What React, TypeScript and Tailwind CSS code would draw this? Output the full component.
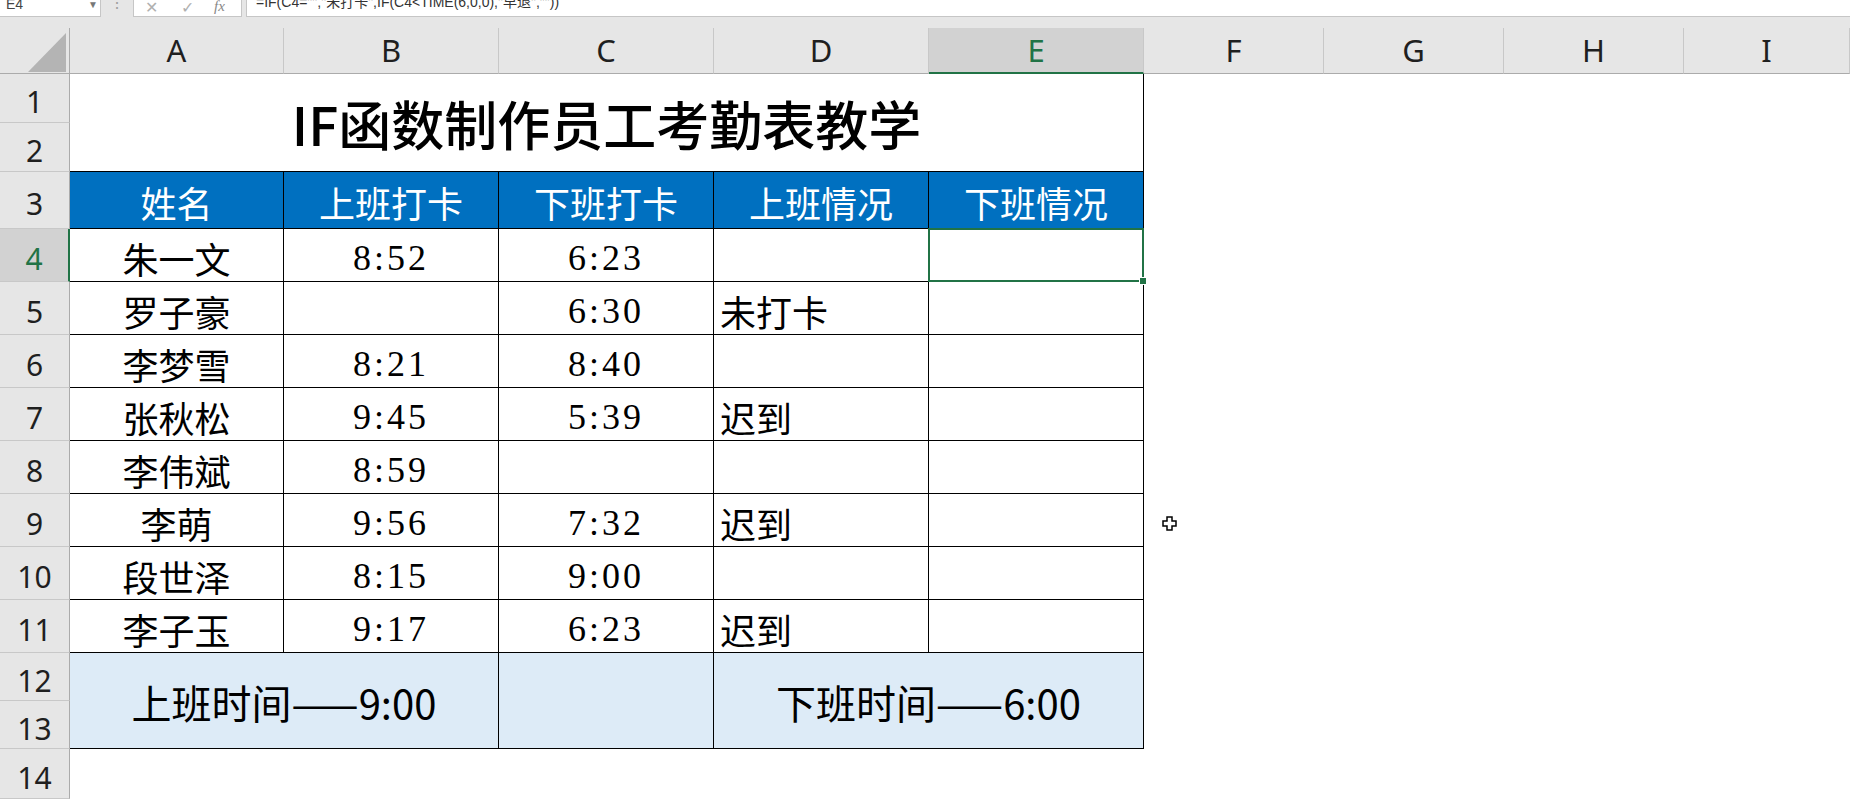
import * as React from 'react';

const cols = ['A', 'B', 'C', 'D', 'E', 'F', 'G', 'H', 'I'];

const heads = ['姓名', '上班打卡', '下班打卡', '上班情况', '下班情况'];

const rows = [
    ['朱一文', '8:52', '6:23', ''],
    ['罗子豪', '', '6:30', '未打卡'],
    ['李梦雪', '8:21', '8:40', ''],
    ['张秋松', '9:45', '5:39', '迟到'],
    ['李伟斌', '8:59', '', ''],
    ['李萌', '9:56', '7:32', '迟到'],
    ['段世泽', '8:15', '9:00', ''],
    ['李子玉', '9:17', '6:23', '迟到'],
];

function RowHead({ n, active = false }: { n: number; active?: boolean }) {
    return (
        <div
            className={`col-start-1 flex items-center justify-center pt-[8px] text-[30px] leading-none font-['Noto_Sans',sans-serif] border-b border-b-[#c8c8c8] ${
                active
                    ? 'bg-[#d2d2d2] text-[#217346] border-r-2 border-r-[#217346]'
                    : 'bg-[#e6e6e6] text-[#1f1f1f] border-r border-r-[#ababab]'
            }`}
        >
            {n}
        </div>
    );
}

function FormulaBar() {
    return (
        <div className="h-[18px] flex bg-[#e6e6e6] overflow-hidden">
            <div className="w-[101px] h-[17px] bg-white border-r border-b border-[#c6c6c6] relative overflow-hidden">
                <span className="absolute left-[6px] -top-[6px] text-[14px] text-[#444] font-['Liberation_Sans',sans-serif]">E4</span>
                <span className="absolute left-[88px] -top-[3px] text-[10px] text-[#777]">▼</span>
            </div>
            <div className="w-[32px] flex justify-center">
                <span className="-mt-[6px] text-[16px] leading-none text-[#a0a0a0]">⋮</span>
            </div>
            <div className="w-[109px] h-[17px] bg-white border-x border-b border-[#c6c6c6] relative overflow-hidden text-[#b0b0b0]">
                <span className="absolute left-[11px] -top-[5px] text-[16px]">✕</span>
                <span className="absolute left-[47px] -top-[5px] text-[16px]">✓</span>
                <span className="absolute left-[80px] -top-[5px] text-[15px] italic font-['Liberation_Serif',serif] text-[#888]">fx</span>
            </div>
            <div className="ml-[4px] flex-1 h-[17px] bg-white border-l border-b border-[#c6c6c6] relative overflow-hidden">
                <span className="absolute left-[9px] -top-[8px] text-[14px] whitespace-nowrap text-[#333] font-['Liberation_Sans','Noto_Sans_CJK_SC',sans-serif]">
                    =IF(C4="","未打卡",IF(C4&lt;TIME(6,0,0),"早退",""))
                </span>
            </div>
        </div>
    );
}

export default function App() {
    const cjk = "font-['Noto_Sans_CJK_SC',sans-serif]";
    const time = "font-['Liberation_Serif','Noto_Sans_CJK_SC',serif] tracking-[3px]";
    const cell = 'border-r border-b border-black flex items-center';

    return (
        <div className="w-[1850px] h-[800px] overflow-hidden bg-white relative">
            <FormulaBar />
            <div className="h-[10px] bg-[#e6e6e6]" />
            <div className="grid grid-cols-[70px_214px_215px_215px_215px_215px_180px_180px_180px_1fr] grid-rows-[46px_49px_49px_57px_repeat(8,53px)_48px_48px_50px]">
                {/* column headers */}
                <div className="bg-[#e6e6e6] border-r border-b border-[#ababab] relative">
                    <svg className="absolute left-0 top-0" width="70" height="46" viewBox="0 0 70 46">
                        <polygon points="28,44 66,44 66,5" fill="#b4b4b4" />
                    </svg>
                </div>
                {cols.map((c) => (
                    <div
                        key={c}
                        className={`flex items-center justify-center text-[31px] leading-none font-['Noto_Sans',sans-serif] border-r border-r-[#c8c8c8] ${
                            c === 'E'
                                ? 'bg-[#d2d2d2] text-[#217346] border-b-2 border-b-[#217346]'
                                : 'bg-[#e6e6e6] text-[#1f1f1f] border-b border-b-[#ababab]'
                        }`}
                    >
                        {c}
                    </div>
                ))}

                {/* rows 1-2: title */}
                <RowHead n={1} />
                <div className={`col-span-5 row-span-2 border-r border-b border-black flex items-center justify-center pt-[2px] text-[53px] leading-none font-medium text-black ${cjk}`}>
                    IF函数制作员工考勤表教学
                </div>
                <RowHead n={2} />

                {/* row 3: headers */}
                <RowHead n={3} />
                {heads.map((h) => (
                    <div key={h} className={`${cell} justify-center bg-[#0070c0] text-white text-[36px] leading-none pt-[4px] ${cjk}`}>
                        {h}
                    </div>
                ))}

                {/* rows 4-11 */}
                {rows.map((r, i) => (
                    <React.Fragment key={i}>
                        <RowHead n={i + 4} active={i === 0} />
                        <div className={`${cell} justify-center text-[36px] leading-none pt-[6px] text-black ${cjk}`}>{r[0]}</div>
                        <div className={`${cell} justify-center text-[36px] leading-none pt-[6px] text-black ${time}`}>{r[1]}</div>
                        <div className={`${cell} justify-center text-[36px] leading-none pt-[6px] text-black ${time}`}>{r[2]}</div>
                        <div className={`${cell} pl-[6px] text-[36px] leading-none pt-[6px] text-black ${cjk}`}>{r[3]}</div>
                        <div className={`${cell} relative`}>
                            {i === 0 && (
                                <div className="absolute -left-px -top-px -right-px -bottom-px border-2 border-[#217346] z-10">
                                    <div className="absolute -right-[5px] -bottom-[5px] w-[8px] h-[8px] bg-[#217346] border border-white" />
                                </div>
                            )}
                        </div>
                    </React.Fragment>
                ))}

                {/* rows 12-13: summary */}
                <RowHead n={12} />
                <div className={`col-span-2 row-span-2 ${cell} justify-center bg-[#ddebf7] text-[40px] leading-none pt-[2px] text-black ${cjk}`}>
                    上班时间——9:00
                </div>
                <div className={`row-span-2 ${cell} bg-[#ddebf7]`} />
                <div className={`col-span-2 row-span-2 ${cell} justify-center bg-[#ddebf7] text-[40px] leading-none pt-[2px] text-black ${cjk}`}>
                    下班时间——6:00
                </div>
                <RowHead n={13} />
                <RowHead n={14} />
            </div>

            {/* mouse cursor */}
            <svg className="absolute left-[1162px] top-[516px]" width="15" height="15" viewBox="0 0 15 15">
                <path d="M5 1h5v4h4v5h-4v4H5v-4H1V5h4z" fill="#fff" stroke="#000" strokeWidth="1.5" />
            </svg>
        </div>
    );
}
